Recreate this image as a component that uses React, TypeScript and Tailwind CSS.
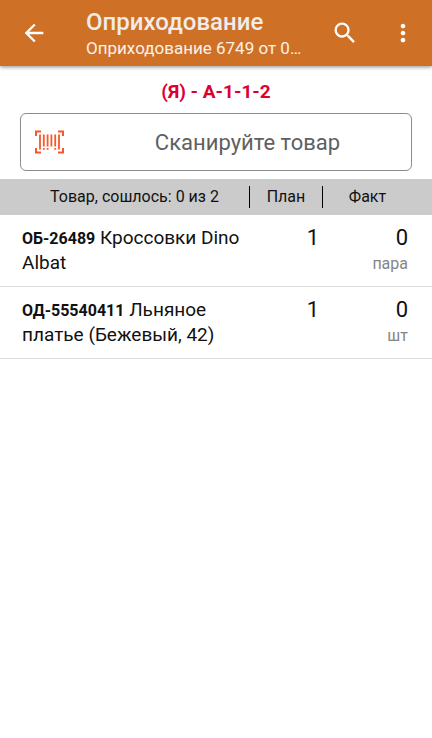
import { MdArrowBack, MdMoreVert, MdSearch } from 'react-icons/md';

const items = [
  { code: 'ОБ-26489', name: 'Кроссовки Dino Albat', plan: 1, fact: 0, unit: 'пара' },
  { code: 'ОД-55540411', name: 'Льняное платье (Бежевый, 42)', plan: 1, fact: 0, unit: 'шт' },
];

function BarcodeIcon() {
  return (
    <svg className="w-[29px] h-6 shrink-0" viewBox="0 0 29 24" fill="none" stroke="#f9572b" aria-hidden="true">
      <path strokeWidth="2" d="M6 1.5H1V6M23 1.5H28V6M6 22.5H1V18M23 22.5H28V18" />
      <path strokeWidth="1.8" d="M5 4.5V19.5M8.8 4.5V16.5M12.6 4.5V16.5M16.4 4.5V16.5M20.2 4.5V16.5M24 4.5V19.5" />
      <path strokeWidth="1.8" d="M8.8 18V19.8M12.6 18V19.8M20.2 18V19.8" />
    </svg>
  );
}

function Header() {
  return (
    <header className="flex items-center bg-[#cf7027] pl-5 pr-[15px] py-[7px] text-white shadow-[0_1px_4px_rgba(0,0,0,0.45)]">
      <button type="button" aria-label="Назад" className="shrink-0">
        <MdArrowBack className="w-7 h-7" />
      </button>
      <div className="flex-1 min-w-0 ml-[38px]">
        <h1 className="text-[24px] leading-[30px] font-medium text-[#f0ece9] truncate">Оприходование</h1>
        <p className="text-[17px] leading-[22px] text-[#fbf1ea] truncate">Оприходование 6749 от 0…</p>
      </div>
      <button type="button" aria-label="Поиск" className="shrink-0 mr-[30px]">
        <MdSearch className="w-7 h-7" />
      </button>
      <button type="button" aria-label="Меню" className="shrink-0">
        <MdMoreVert className="w-7 h-7" />
      </button>
    </header>
  );
}

export default function App() {
  return (
    <div className="min-h-screen bg-white text-[#111] font-[Roboto,sans-serif]">
      <Header />

      <main>
        <h2 className="pt-3 text-center text-[19px] leading-7 font-bold text-[#dc0032]">(Я) - А-1-1-2</h2>

        <label className="mx-5 mt-[7px] flex items-center h-[58px] rounded-md border border-[#8c8c8c] pl-[14px]">
          <BarcodeIcon />
          <input
            type="text"
            aria-label="Сканируйте товар"
            placeholder="Сканируйте товар"
            className="flex-1 min-w-0 ml-5 h-full text-center text-[22px] outline-none placeholder:text-[#606060]"
          />
        </label>

        <table className="mt-2 w-full table-fixed border-collapse">
          <thead className="bg-[#cbcbcb] text-[16px] leading-[22px]">
            <tr>
              <th className="py-[7px] font-normal">
                <div className="pl-5 border-r border-black text-center">Товар, сошлось: 0 из 2</div>
              </th>
              <th className="w-[73px] py-[7px] font-normal">
                <div className="border-r border-black text-center">План</div>
              </th>
              <th className="w-[109px] py-[7px] pr-5 font-normal">Факт</th>
            </tr>
          </thead>
          <tbody>
            {items.map((item) => (
              <tr key={item.code} className="border-b border-[#dedede] align-top">
                <td className="pl-[22px] pt-[10px] pb-[11px] text-[19px] leading-[25px]">
                  <b className="text-[16px] leading-none">{item.code}</b> {item.name}
                </td>
                <td className="pt-[10px] pr-1 text-right text-[22px] leading-[26px]">{item.plan}</td>
                <td className="pt-[10px] pr-6 text-right">
                  <div className="text-[22px] leading-[26px]">{item.fact}</div>
                  <div className="text-[16px] leading-[26px] text-[#858585]">{item.unit}</div>
                </td>
              </tr>
            ))}
          </tbody>
        </table>
      </main>
    </div>
  );
}
